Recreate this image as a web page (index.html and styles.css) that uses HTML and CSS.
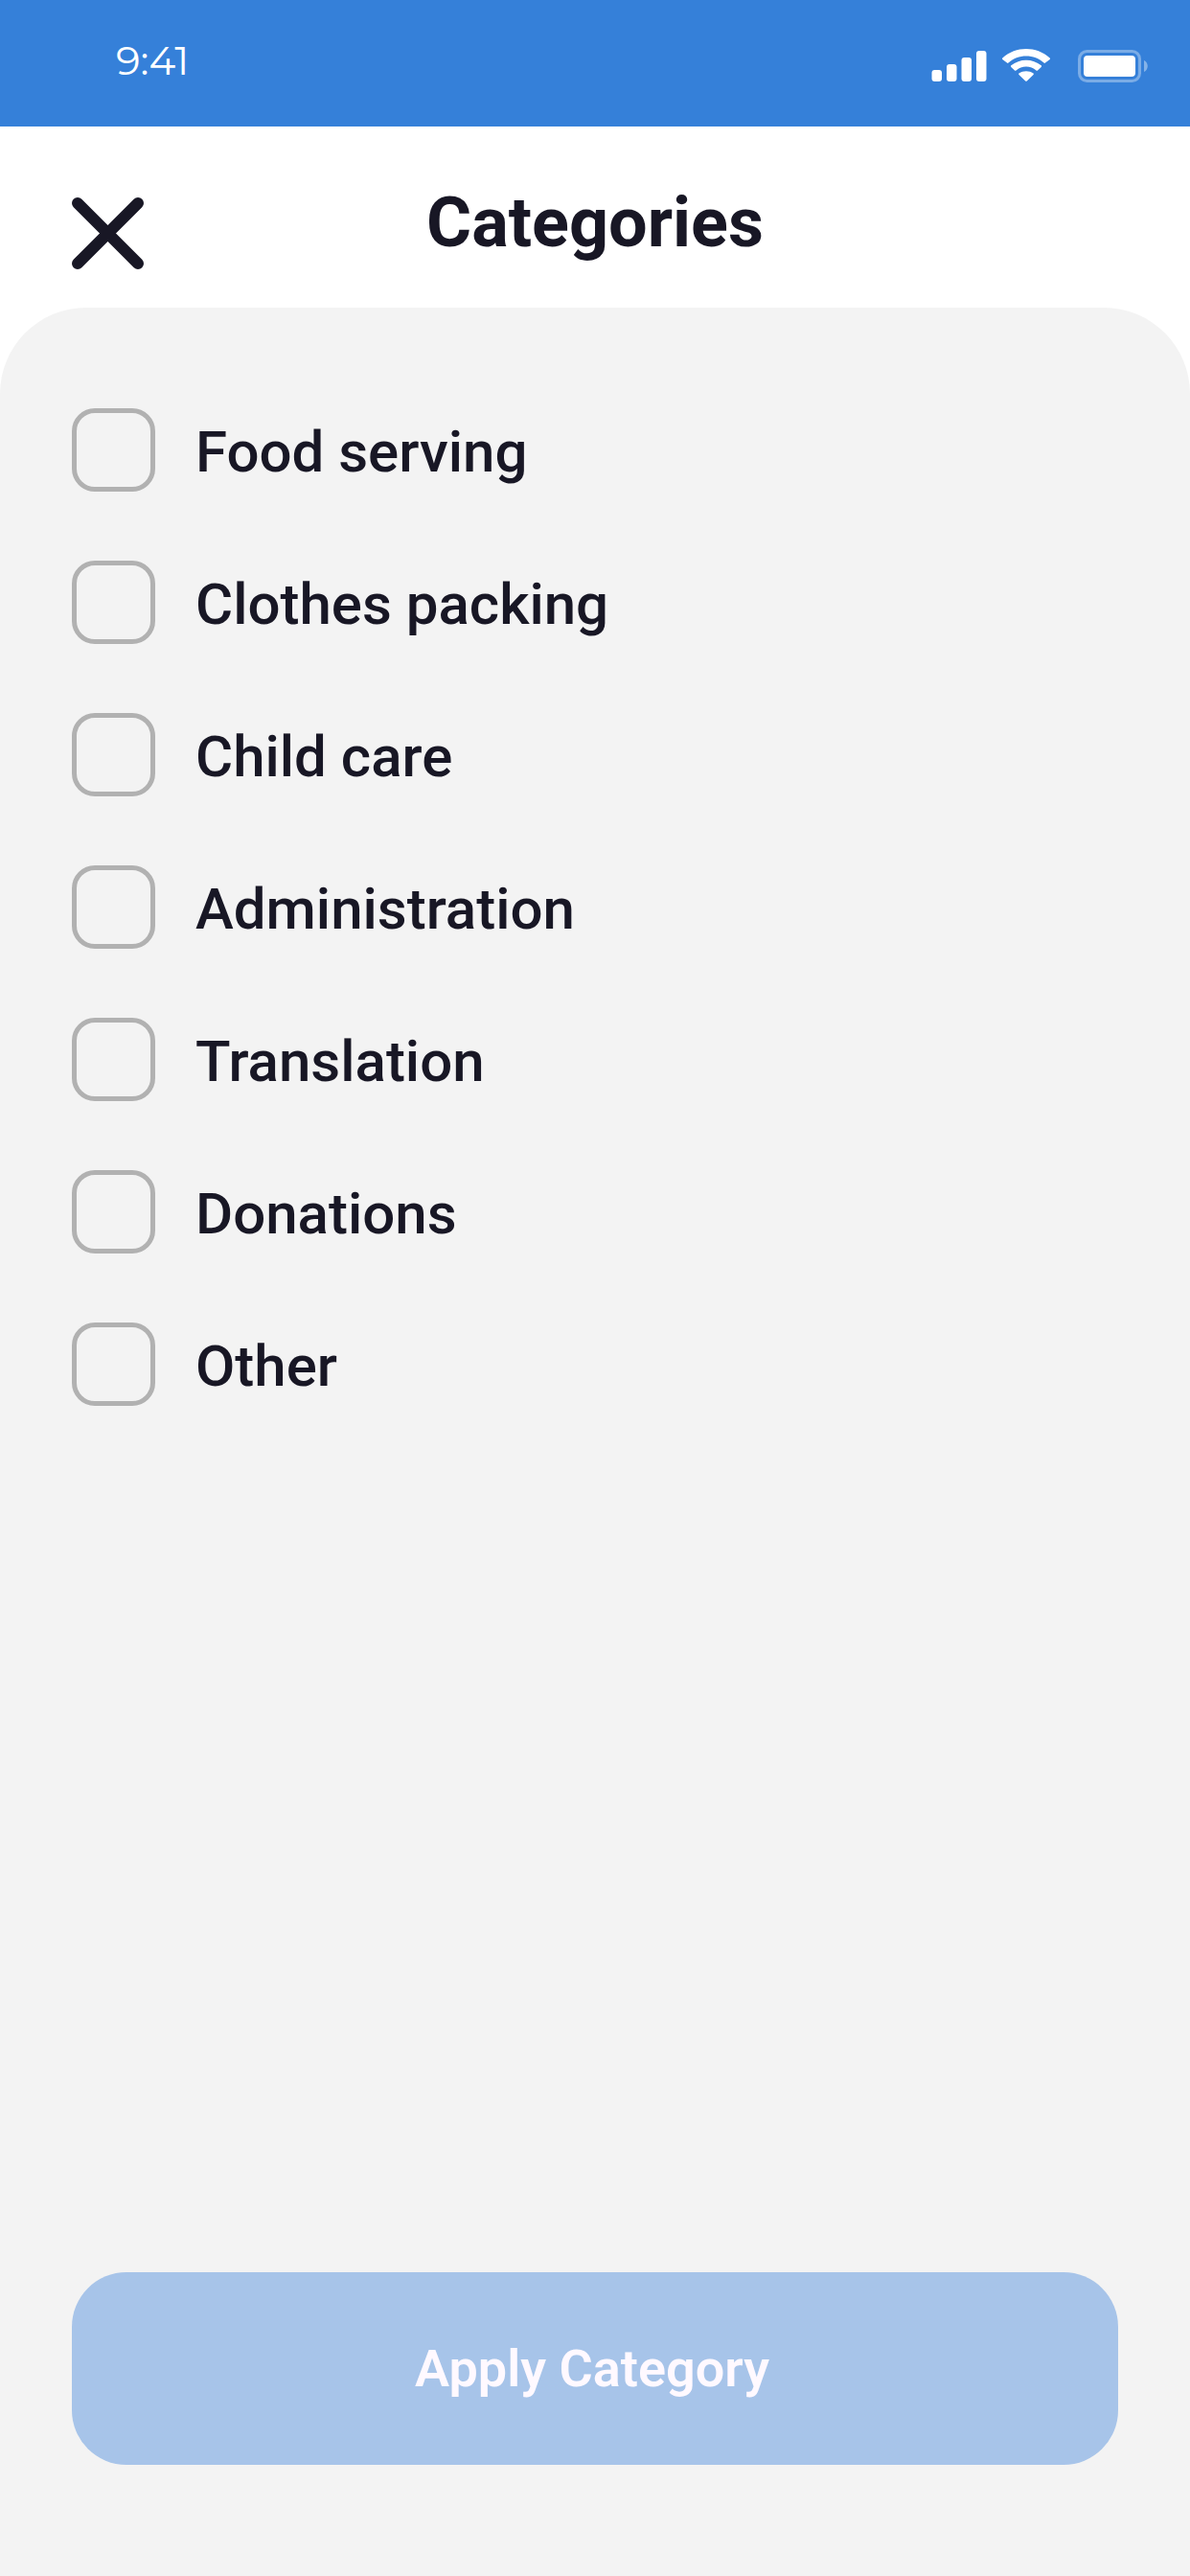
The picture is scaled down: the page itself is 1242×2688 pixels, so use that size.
FILE: index.html
```html
<!DOCTYPE html>
<html lang="en">
<head>
<meta charset="utf-8">
<meta name="viewport" content="width=device-width, initial-scale=1">
<title>Categories</title>
<link rel="stylesheet" href="styles.css">
</head>
<body>
<div class="status">
  <span class="time">9:41</span>
  <svg class="indicators" width="228" height="36" viewBox="0 0 228 36" fill="#fff" aria-hidden="true">
    <rect x="0.500" y="22" width="10.500" height="12" rx="3"/>
    <rect x="16" y="16" width="10.500" height="18" rx="3"/>
    <rect x="31.500" y="9" width="10.500" height="25" rx="3"/>
    <rect x="47" y="2" width="10.500" height="32" rx="3"/>
    <path d="M99 7.500C106 7.500 112.500 10 117.500 14.600C118 15 118.600 15 119 14.600L123.700 11C124.100 10.500 124.100 9.900 123.700 9.400C109.500-3.100 88.500-3.100 74.300 9.400C73.900 9.900 73.900 10.500 74.300 11L79 14.600C79.400 15 80 15 80.500 14.600C85.500 10 92 7.500 99 7.500Z"/>
    <path d="M99 18.500C103 18.500 106.500 20 109.500 22.400C110 22.800 110.600 22.800 111 22.400L114.700 18.900C115.200 18.400 115.200 17.700 114.700 17.300C105.800 9.800 92.200 9.800 83.300 17.300C82.800 17.700 82.800 18.400 83.300 18.900L87 22.400C87.400 22.800 88 22.800 88.500 22.400C91.500 20 95 18.500 99 18.500Z"/>
    <path d="M106.500 27C107 26.500 107 25.900 106.500 25.500C102 22.600 96 22.600 91.500 25.500C91 25.900 91 26.500 91.500 27L98.200 33.400C98.700 33.900 99.300 33.900 99.800 33.400Z"/>
    <rect x="154.500" y="2.500" width="63" height="31" rx="8" fill="none" stroke="#fff" stroke-width="3" opacity=".35"/>
    <rect x="159" y="7" width="54" height="22" rx="4"/>
    <path d="M222 12V24C227 22 227 14 222 12Z" opacity=".4"/>
  </svg>
</div>
<header class="header">
  <button class="close" type="button" aria-label="Close">
    <svg width="76" height="76" viewBox="0 0 76 76" fill="none" stroke="#181725" stroke-width="12" stroke-linecap="round" aria-hidden="true"><path d="M6 6L69 69M69 6L6 69"/></svg>
  </button>
  <h1 class="title">Categories</h1>
</header>
<main class="sheet">
  <form class="form">
    <div class="options">
      <label class="option"><input class="box" type="checkbox"><span class="name">Food serving</span></label>
      <label class="option"><input class="box" type="checkbox"><span class="name">Clothes packing</span></label>
      <label class="option"><input class="box" type="checkbox"><span class="name">Child care</span></label>
      <label class="option"><input class="box" type="checkbox"><span class="name">Administration</span></label>
      <label class="option"><input class="box" type="checkbox"><span class="name">Translation</span></label>
      <label class="option"><input class="box" type="checkbox"><span class="name">Donations</span></label>
      <label class="option"><input class="box" type="checkbox"><span class="name">Other</span></label>
    </div>
    <button class="apply" type="button">Apply Category</button>
  </form>
</main>
</body>
</html>
```
FILE: styles.css
```css
* { box-sizing: border-box; }
body {
  margin: 0;
  min-height: 100vh;
  display: flex;
  flex-direction: column;
  background: #fff;
  color: #181725;
  font-family: Roboto, "Liberation Sans", sans-serif;
}
.status {
  display: flex;
  justify-content: space-between;
  align-items: flex-start;
  height: 132px;
  padding: 39px 42px 0 121px;
  background: #3580d9;
  color: #fff;
}
.time { font-family: Montserrat, Inter, sans-serif; font-size: 42px; line-height: 48px; font-weight: 400; }
.indicators { margin-top: 12px; }
.header {
  display: grid;
  grid-template-columns: 76px 1fr 76px;
  align-items: start;
  height: 189px;
  padding: 65px 75px 0;
}
.close { margin: 9px 0 0; padding: 0; border: 0; background: none; line-height: 0; }
.title { margin: 0; font-size: 72px; line-height: 72px; font-weight: 700; text-align: center; }
.sheet {
  flex: 1;
  display: flex;
  padding: 105px 75px 116px;
  border-radius: 90px 90px 0 0;
  background: #f3f3f3;
}
.form { flex: 1; display: flex; flex-direction: column; justify-content: space-between; }
.options { display: grid; gap: 72px; }
.option { display: flex; align-items: center; gap: 42px; font-size: 60px; line-height: 72px; font-weight: 500; }
.name { padding-top: 5px; }
.box { appearance: none; width: 87px; height: 87px; margin: 0; border: 5px solid #b1b1b1; border-radius: 24px; }
.box:checked { background: #3580d9; border-color: #3580d9; }
.apply {
  height: 201px;
  padding: 0 6px 0 0;
  border: 0;
  border-radius: 57px;
  background: #a7c4e9;
  color: #fff9ff;
  font: 600 54px/64px Roboto, "Liberation Sans", sans-serif;
}
```
